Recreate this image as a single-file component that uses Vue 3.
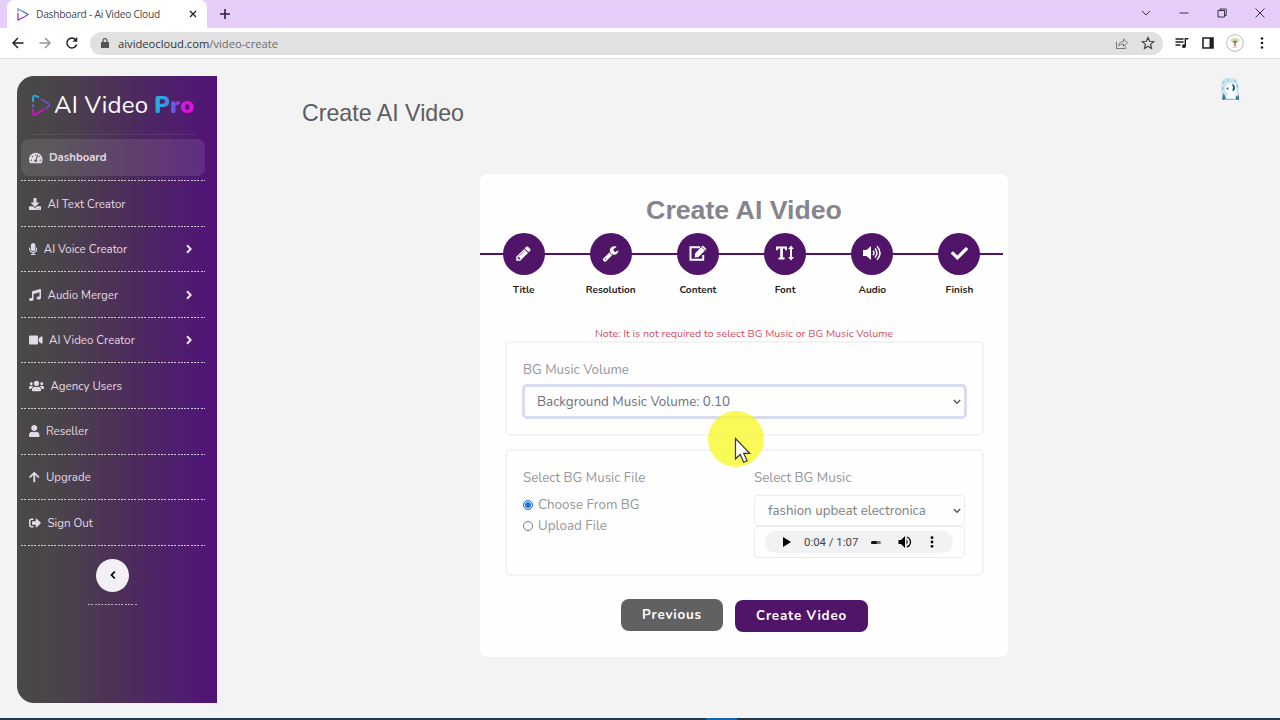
<script setup>
import {ref} from 'vue'

const menuItems = [
  {label: 'Dashboard', icon: 'gauge', active: true},
  {label: 'AI Text Creator', icon: 'download'},
  {label: 'AI Voice Creator', icon: 'microphone', sub: true},
  {label: 'Audio Merger', icon: 'music', sub: true},
  {label: 'AI Video Creator', icon: 'video', sub: true},
  {label: 'Agency Users', icon: 'users'},
  {label: 'Reseller', icon: 'user'},
  {label: 'Upgrade', icon: 'arrowUp'},
  {label: 'Sign Out', icon: 'signOut'},
]

const icons = {
  gauge: {w: 576, d: 'M288 32C128.94 32 0 160.94 0 320c0 52.8 14.25 102.26 39.06 144.8 5.61 9.62 16.3 15.2 27.44 15.2h443c11.14 0 21.83-5.58 27.44-15.2C561.75 422.26 576 372.8 576 320c0-159.06-128.94-288-288-288zm0 64c14.71 0 26.58 10.13 30.32 23.65-1.11 2.26-2.64 4.23-3.45 6.67l-9.22 27.67c-5.13 3.49-10.97 6.01-17.64 6.01-17.67 0-32-14.33-32-32S270.33 96 288 96zM96 384c-17.67 0-32-14.33-32-32s14.33-32 32-32 32 14.33 32 32-14.33 32-32 32zm48-160c-17.67 0-32-14.33-32-32s14.33-32 32-32 32 14.33 32 32-14.33 32-32 32zm246.77-72.41l-61.33 184C343.13 347.33 352 364.54 352 384c0 11.72-3.38 22.55-8.88 32H232.88c-5.5-9.45-8.88-20.28-8.88-32 0-33.94 26.5-61.43 59.9-63.59l61.34-184.01c4.17-12.56 17.73-19.45 30.36-15.17 12.57 4.19 19.35 17.79 15.17 30.36zm14.66 57.2l15.52-46.55c3.47-1.29 7.13-2.23 11.05-2.23 17.67 0 32 14.33 32 32s-14.33 32-32 32c-11.38-.01-20.89-6.28-26.57-15.22zM480 384c-17.67 0-32-14.33-32-32s14.33-32 32-32 32 14.33 32 32-14.33 32-32 32z'},
  download: {w: 512, d: 'M216 0h80c13.3 0 24 10.7 24 24v168h87.7c17.8 0 26.7 21.5 14.1 34.1L269.7 378.3c-7.5 7.5-19.8 7.5-27.3 0L90.1 226.1c-12.6-12.6-3.7-34.1 14.1-34.1H192V24c0-13.3 10.7-24 24-24zm296 376v112c0 13.3-10.7 24-24 24H24c-13.3 0-24-10.7-24-24V376c0-13.3 10.7-24 24-24h146.7l49 49c20.1 20.1 52.5 20.1 72.6 0l49-49H488c13.3 0 24 10.7 24 24zm-124 88c0-11-9-20-20-20s-20 9-20 20 9 20 20 20 20-9 20-20zm64 0c0-11-9-20-20-20s-20 9-20 20 9 20 20 20 20-9 20-20z'},
  microphone: {w: 352, d: 'M176 352c53.02 0 96-42.98 96-96V96c0-53.02-42.98-96-96-96S80 42.98 80 96v160c0 53.02 42.98 96 96 96zm160-160h-16c-8.84 0-16 7.16-16 16v48c0 74.8-64.49 134.82-140.79 127.38C96.71 376.89 48 317.11 48 250.3V208c0-8.84-7.16-16-16-16H16c-8.84 0-16 7.16-16 16v40.16c0 89.64 63.97 169.55 152 181.69V464H96c-8.84 0-16 7.16-16 16v16c0 8.84 7.16 16 16 16h160c8.84 0 16-7.16 16-16v-16c0-8.84-7.16-16-16-16h-56v-33.77C285.71 418.47 352 344.9 352 256v-48c0-8.84-7.16-16-16-16z'},
  music: {w: 512, d: 'M511.99 32.01c0-21.71-21.1-37.01-41.6-30.51L150.4 96c-13.3 4.2-22.4 16.5-22.4 30.5v261.42c-10.05-2.38-20.72-3.92-32-3.92-53.02 0-96 28.65-96 64s42.98 64 96 64 96-28.65 96-64V214.31l256-75.02v184.63c-10.05-2.38-20.72-3.92-32-3.92-53.02 0-96 28.65-96 64s42.98 64 96 64 96-28.65 96-64l-.01-351.99z'},
  video: {w: 576, d: 'M336.2 64H47.8C21.4 64 0 85.4 0 111.8v288.4C0 426.6 21.4 448 47.8 448h288.4c26.4 0 47.8-21.4 47.8-47.8V111.8c0-26.4-21.4-47.8-47.8-47.8zm189.4 37.7L416 177.3v157.4l109.6 75.5c21.2 14.6 50.4-.3 50.4-25.8V127.5c0-25.4-29.1-40.4-50.4-25.8z'},
  users: {w: 640, d: 'M96 224c35.3 0 64-28.7 64-64s-28.7-64-64-64-64 28.7-64 64 28.7 64 64 64zm448 0c35.3 0 64-28.7 64-64s-28.7-64-64-64-64 28.7-64 64 28.7 64 64 64zm32 32h-64c-17.6 0-33.5 7.1-45.1 18.6 40.3 22.1 68.9 62 75.1 109.4h66c17.7 0 32-14.3 32-32v-32c0-35.3-28.7-64-64-64zm-256 0c61.9 0 112-50.1 112-112S381.9 32 320 32 208 82.1 208 144s50.1 112 112 112zm76.8 32h-8.3c-20.8 10-43.9 16-68.5 16s-47.6-6-68.5-16h-8.3C179.6 288 128 339.6 128 403.2V432c0 26.5 21.5 48 48 48h288c26.5 0 48-21.5 48-48v-28.8c0-63.6-51.6-115.2-115.2-115.2zm-223.7-13.4C161.5 263.1 145.6 256 128 256H64c-35.3 0-64 28.7-64 64v32c0 17.7 14.3 32 32 32h65.9c6.3-47.4 34.9-87.3 75.2-109.4z'},
  user: {w: 448, d: 'M224 256c70.7 0 128-57.3 128-128S294.7 0 224 0 96 57.3 96 128s57.3 128 128 128zm89.6 32h-16.7c-22.2 10.2-46.9 16-72.9 16s-50.6-5.8-72.9-16h-16.7C60.2 288 0 348.2 0 422.4V464c0 26.5 21.5 48 48 48h352c26.5 0 48-21.5 48-48v-41.6c0-74.2-60.2-134.4-134.4-134.4z'},
  arrowUp: {w: 448, d: 'M34.9 289.5l-22.2-22.2c-9.4-9.4-9.4-24.6 0-33.9L207 39c9.4-9.4 24.6-9.4 33.9 0l194.3 194.3c9.4 9.4 9.4 24.6 0 33.9L413 289.4c-9.5 9.5-25 9.3-34.3-.4L264 168.6V456c0 13.3-10.7 24-24 24h-32c-13.3 0-24-10.7-24-24V168.6L69.2 289.1c-9.3 9.8-24.8 10-34.3.4z'},
  signOut: {w: 512, d: 'M497 273L329 441c-15 15-41 4.5-41-17v-96H152c-13.3 0-24-10.7-24-24v-96c0-13.3 10.7-24 24-24h136V88c0-21.4 25.9-32 41-17l168 168c9.3 9.4 9.3 24.6 0 34zM192 436v-40c0-6.6-5.4-12-12-12H96c-17.7 0-32-14.3-32-32V160c0-17.7 14.3-32 32-32h84c6.6 0 12-5.4 12-12V76c0-6.6-5.4-12-12-12H96c-53 0-96 43-96 96v192c0 53 43 96 96 96h84c6.6 0 12-5.4 12-12z'},
}

const steps = ['Title', 'Resolution', 'Content', 'Font', 'Audio', 'Finish']

const volume = ref('0.10')
const source = ref('bg')
</script>

<template>
  <div class="browser">
    <div class="tabbar">
      <div class="tab">
        <svg class="favicon" viewBox="0 0 12 13">
          <path d="M1 4V1l4 2" stroke="#5aa6e6" />
          <path d="M5 3l6 3.500-3 2" stroke="#5560d8" />
          <path d="M8 8.500L1 12V5" stroke="#b32bc8" />
        </svg>
        <span class="tab-title">Dashboard - Ai Video Cloud</span>
        <svg class="tab-close" viewBox="0 0 8 8"><path d="M1 1l6 6M7 1l-6 6" /></svg>
      </div>
      <svg class="tab-new" viewBox="0 0 12 12"><path d="M6 1v10M1 6h10" /></svg>
      <div class="window-buttons">
        <svg viewBox="0 0 12 12"><path d="M2 4l4 4 4-4" /></svg>
        <svg viewBox="0 0 12 12"><path d="M1.500 6h9" /></svg>
        <svg viewBox="0 0 12 12"><path d="M2 3.500h6.500V10H2zM4 3.500V2h6.200v6.500H8.500" /></svg>
        <svg viewBox="0 0 12 12"><path d="M1.500 1.500l9 9M10.500 1.500l-9 9" /></svg>
      </div>
    </div>

    <div class="toolbar">
      <svg class="nav-icon" viewBox="0 0 14 14"><path d="M12.500 7H2M7 2L2 7l5 5" /></svg>
      <svg class="nav-icon faded" viewBox="0 0 14 14"><path d="M1.500 7H12M7 2l5 5-5 5" /></svg>
      <svg class="nav-icon" viewBox="0 0 14 14"><path d="M11.700 8.500A5 5 0 1 1 10.800 3.800" /><path d="M12.300 1v4.800H7.500z" class="solid" /></svg>
      <div class="address">
        <svg class="lock" viewBox="0 0 8 10"><path d="M0 4h8v6H0z" fill="#55565a" /><path d="M2 4.500V2.700a2 2 0 0 1 4 0v1.800" fill="none" stroke="#55565a" stroke-width="1.200" /></svg>
        <span class="url"><b>aivideocloud.com</b>/video-create</span>
        <svg class="share" viewBox="0 0 14 13"><path d="M1.500 4.500v7h9V9.500M3.500 9c.5-3 2.300-4.500 5-4.500V2l4 3.800-4 3.700V7c-2.200 0-3.800.5-5 2z" /></svg>
        <svg class="star" viewBox="0 0 14 14"><path d="M7 1.600l1.600 3.700 4 .4-3 2.700.9 4L7 10.300l-3.500 2.100.9-4-3-2.700 4-.4z" /></svg>
      </div>
      <svg class="media" viewBox="0 0 14 12"><path d="M.5 2h8M.5 5h8M.5 8h5" /><path d="M10.300 9V1.700h3" /><circle cx="8.900" cy="9.200" r="1.900" /></svg>
      <svg class="panel-icon" viewBox="0 0 12 12"><path d="M1 1h10v10H1z" fill="none" stroke="#202124" stroke-width="1.600" /><path d="M7.500 1H11v10H7.500z" fill="#202124" /></svg>
      <svg class="profile" viewBox="0 0 18 18">
        <circle cx="9" cy="9" r="8.400" fill="#fdfdfb" stroke="#b0aaa4" stroke-width=".8" />
        <path d="M4.500 7c-.5-4 9.500-4 9 0-.5 1.500-2.500.5-4.500.5S5 8.500 4.500 7z" fill="#c6e3ad" />
        <path d="M9 6.500v6M9 9l2-1.700M9 9L7 7.300" stroke="#a5604f" stroke-width="1.300" fill="none" />
        <path d="M6.500 13.500h5" stroke="#e5d6bd" />
      </svg>
      <svg class="dots" viewBox="0 0 4 14"><circle cx="2" cy="2.500" r="1.300" /><circle cx="2" cy="7" r="1.300" /><circle cx="2" cy="11.500" r="1.300" /></svg>
    </div>

    <div class="page">
      <aside class="sidebar">
        <div class="brand">
          <svg class="brand-mark" viewBox="0 0 20 23">
            <path d="M2 8V3.500Q2.200 1 5 2l3 1.700" stroke="#2ba0dc" />
            <path d="M10 5l7.500 4.700q1.500 1.300 0 2.800l-2.300 1.600" stroke="#6a50d8" />
            <path d="M13.500 15.200L4.500 20.600Q2 21.500 2 19v-4" stroke="#c414d2" />
            <path d="M2 10.300v3" stroke="#5f62d8" />
          </svg>
          <span class="brand-name">AI Video</span>
          <span class="brand-pro">Pro</span>
        </div>
        <div class="brand-line"></div>
        <nav class="menu">
          <div v-for="item in menuItems" :key="item.label" class="menu-row">
            <a class="menu-item" :class="{active: item.active}">
              <svg class="menu-icon" :viewBox="`0 0 ${icons[item.icon].w} 512`" :style="{width: icons[item.icon].w / 512 * 12 + 'px'}">
                <path :d="icons[item.icon].d" />
              </svg>
              <span>{{ item.label }}</span>
              <svg v-if="item.sub" class="chevron" viewBox="0 0 6 10"><path d="M1 1.300L4.700 5 1 8.700" /></svg>
            </a>
          </div>
        </nav>
        <div class="collapse">
          <svg viewBox="0 0 6 10"><path d="M4.800 1.500L1.500 5l3.300 3.500" /></svg>
        </div>
        <div class="collapse-line"></div>
      </aside>

      <main class="main">
        <header class="top">
          <h1>Create AI Video</h1>
          <svg class="avatar" viewBox="0 0 20 24">
            <path d="M4 2Q10-1 16 2q3 4 3 9v11H1V9q0-5 3-7z" fill="#cfe5ee" />
            <path d="M5 10Q7 6 11 6q5 0 5 5l1 11H7q-1-3 1-6-3 0-3-2z" fill="#f6fbfd" />
            <path d="M11.500 7q4 .5 3.500 5l-1.800 2.300-1-1 1-2.800q-.2-1.500-1.700-3.500z" fill="#1f5366" />
            <circle cx="7.500" cy="11.500" r=".9" fill="#1f5366" />
            <path d="M2 23l1.500-7L5 19l1 4zM15.500 23l.5-5 1.500 2 1.500-3v6z" fill="#3f7388" />
            <path d="M1 23q9-3 18 0z" fill="#8cbccc" />
            <path d="M2.500 6l2-2M7 2.500l2 1M14 3l2 1.500M3 10v3M17.500 8v3" stroke="#7bb5cb" />
          </svg>
        </header>

        <section class="card">
          <h2>Create AI Video</h2>
          <ol class="steps">
            <li v-for="step in steps" :key="step">
              <span class="circle">
                <svg v-if="step === 'Title'" viewBox="0 0 1792 1792"><path d="M491 1536l91-91-235-235-91 91v107h128v128h107zm523-928q0-22-22-22-10 0-17 7l-542 542q-7 7-7 17 0 22 22 22 10 0 17-7l542-542q7-7 7-17zm-54-192l416 416-832 832h-416v-416zm683 96q0 53-37 90l-166 166-416-416 166-165q36-38 90-38 53 0 91 38l235 234q37 39 37 91z" /></svg>
                <svg v-else-if="step === 'Resolution'" viewBox="0 0 1792 1792"><path d="M448 1472q0-26-19-45t-45-19-45 19-19 45 19 45 45 19 45-19 19-45zm644-420l-682 682q-37 37-90 37-52 0-91-37l-106-108q-38-36-38-90 0-53 38-91l681-681q39 98 114.500 173.500t173.500 114.500zm634-435q0 39-23 106-47 134-164.500 217.500t-258.500 83.500q-185 0-316.500-131.500t-131.500-316.500 131.500-316.500 316.500-131.500q58 0 121.500 16.500t107.500 46.500q16 11 16 28t-16 28l-293 169v224l193 107q5-3 79-48.500t135.500-81 70.500-35.500q15 0 23.500 10t8.500 25z" /></svg>
                <svg v-else-if="step === 'Content'" class="wide" viewBox="0 0 20 18"><path d="M12 3.200H2.500v12.600h12.700V11" fill="none" stroke="#fff" stroke-width="2" /><path d="M7 9.500l7.800-8 3.700 3.500-8 8-3.700.4z" /><path d="M13.500 2.800l3.700 3.600" stroke="#4f1264" stroke-width=".7" /></svg>
                <svg v-else-if="step === 'Font'" class="wide" viewBox="0 0 20 18"><path d="M1 2.500h11v3.800h-1.700L9.700 4.600H7.900v9h1.700v1.900H3.500v-1.900h1.700v-9H3.400l-.7 1.700H1zM16 1.500l2.900 3.600H17v7.800h1.900L16 16.500l-2.900-3.600H15V5.100h-1.900z" /></svg>
                <svg v-else-if="step === 'Audio'" class="wide" viewBox="0 0 20 18"><path d="M1 6h3.500L9 2v14l-4.500-4H1z" /><path d="M11 6.800q2 2.200 0 4.400M13 4.500q3.800 4.500 0 9M15 2.200q6 6.800 0 13.600" fill="none" stroke="#fff" stroke-width="1.500" /></svg>
                <svg v-else viewBox="0 0 512 512"><path d="M173.898 439.404l-166.400-166.400c-9.997-9.997-9.997-26.206 0-36.204l36.203-36.204c9.997-9.998 26.207-9.998 36.204 0L192 312.690 432.095 72.596c9.997-9.997 26.207-9.997 36.204 0l36.203 36.204c9.997 9.997 9.997 26.206 0 36.204l-294.400 294.401c-9.998 9.997-26.207 9.997-36.204-.001z" /></svg>
              </span>
              <strong>{{ step }}</strong>
            </li>
          </ol>

          <p class="note">Note: It is not required to select BG Music or BG Music Volume</p>

          <div class="box volume-box">
            <label class="field-label">BG Music Volume</label>
            <div class="select focused">
              <span>Background Music Volume: {{ volume }}</span>
              <svg class="caret" viewBox="0 0 8 6"><path d="M.8 1L4 4.300 7.200 1" /></svg>
            </div>
          </div>

          <div class="box music-box">
            <div class="file-col">
              <label class="field-label">Select BG Music File</label>
              <label class="radio"><i :class="{on: source === 'bg'}"></i><span>Choose From BG</span></label>
              <label class="radio"><i :class="{on: source === 'upload'}"></i><span>Upload File</span></label>
            </div>
            <div class="music-col">
              <label class="field-label">Select BG Music</label>
              <div class="select">
                <span>fashion upbeat electronica</span>
                <svg class="caret" viewBox="0 0 8 6"><path d="M.8 1L4 4.300 7.200 1" /></svg>
              </div>
              <div class="player-box">
                <div class="player">
                  <svg class="play" viewBox="0 0 8 10"><path d="M0 0l8 5-8 5z" /></svg>
                  <span class="time">0:04 / 1:07</span>
                  <span class="track"><i></i></span>
                  <svg class="speaker" viewBox="0 0 14 12"><path d="M.5 4H3l4-4v12L3 8H.5z" /><path d="M8.500 3.300q2.300 2.700 0 5.400z" /><path d="M8.800 1q3.700 1.500 3.700 5t-3.700 5" fill="none" stroke="#000" stroke-width="1.300" /></svg>
                  <svg class="more" viewBox="0 0 4 12"><circle cx="2" cy="1.700" r="1.400" /><circle cx="2" cy="6" r="1.400" /><circle cx="2" cy="10.300" r="1.400" /></svg>
                </div>
              </div>
            </div>
          </div>

          <div class="actions">
            <button class="previous">Previous</button>
            <button class="create">Create Video</button>
          </div>
        </section>
      </main>
    </div>

    <div class="taskbar"><span></span></div>

    <div class="pointer">
      <svg viewBox="0 0 18 27"><path d="M1.500 1.500v20.300l4.700-4.200 3.500 7.700 3.400-1.600-3.400-7.300h6z" /></svg>
    </div>
  </div>
</template>

<style>
body {
  background: #f3f3f3;
  overflow: hidden;
}
</style>

<style scoped>
.browser {
  position: relative;
  display: flex;
  flex-direction: column;
  width: 1280px;
  height: 720px;
  overflow: hidden;
  background: #f3f3f3;
  font-family: Nunito, Lato, "Liberation Sans", sans-serif;
}

svg {
  display: block;
  flex: none;
}

.tabbar {
  display: flex;
  align-items: center;
  height: 28px;
  background: #e5cffa;
}

.tab {
  display: flex;
  align-items: center;
  box-sizing: border-box;
  width: 200px;
  height: 28px;
  margin-left: 7px;
  padding-left: 10px;
  background: #fff;
  border-radius: 7px 7px 0 0;
}

.favicon {
  width: 12px;
  height: 13px;
  fill: none;
  stroke-width: 1.3;
}

.tab-title {
  width: 147px;
  margin-left: 7px;
  color: #45464a;
  font: 10.2px "Open Sans", sans-serif;
  letter-spacing: -0.22px;
  white-space: nowrap;
}

.tab-close {
  width: 8px;
  height: 8px;
  margin-left: 6px;
  stroke: #222;
  stroke-width: 1.3;
}

.tab-new {
  width: 12px;
  height: 12px;
  margin-left: 12px;
  stroke: #2e1d3d;
  stroke-width: 1.6;
}

.window-buttons {
  display: flex;
  gap: 26px;
  margin: -3px 14px 0 auto;
}

.window-buttons svg {
  width: 12px;
  height: 12px;
  fill: none;
  stroke: #3d3049;
  stroke-width: 1;
}

.toolbar {
  display: flex;
  align-items: center;
  box-sizing: border-box;
  height: 31px;
  padding: 0 16px 0 11px;
  background: #fff;
  border-bottom: 1px solid #dcdcdc;
}

.nav-icon {
  width: 14px;
  height: 14px;
  margin-right: 13px;
  fill: none;
  stroke: #222;
  stroke-width: 1.5;
}

.nav-icon.faded {
  stroke: #96979a;
}

.nav-icon .solid {
  fill: #222;
  stroke: none;
}

.address {
  display: flex;
  align-items: center;
  box-sizing: border-box;
  width: 1073px;
  height: 23px;
  margin-left: -2px;
  padding: 0 8px 0 11px;
  background: #e1e1e1;
  border-radius: 12px;
}

.lock {
  width: 8px;
  height: 10px;
}

.url {
  margin: 0 auto 0 9px;
  color: #696a6d;
  font: 11.2px "Open Sans", sans-serif;
}

.url b {
  color: #333437;
  font-weight: 400;
}

.share {
  width: 14px;
  height: 13px;
  fill: none;
  stroke: #77787b;
  stroke-width: 1;
}

.star {
  width: 14px;
  height: 14px;
  margin-left: 12px;
  fill: none;
  stroke: #444;
  stroke-width: 1.2;
}

.media {
  width: 14px;
  height: 12px;
  margin-left: 12px;
  fill: none;
  stroke: #202124;
  stroke-width: 1.4;
}

.media circle {
  fill: #202124;
  stroke: none;
}

.panel-icon {
  width: 12px;
  height: 12px;
  margin-left: 13px;
}

.profile {
  width: 18px;
  height: 18px;
  margin-left: 12px;
}

.dots {
  width: 4px;
  height: 14px;
  margin-left: auto;
  fill: #202124;
}

.page {
  display: flex;
  flex: 1;
  padding-left: 17px;
}

.sidebar {
  box-sizing: border-box;
  width: 200px;
  height: 627px;
  margin-top: 17px;
  background: linear-gradient(90deg, #494848 0%, #4a4549 18%, #4d3058 50%, #4f1b70 85%, #501278 100%);
  border-radius: 17px 0 0 17px;
}

.brand {
  display: flex;
  align-items: center;
  height: 58px;
  padding-left: 14px;
}

.brand-mark {
  width: 20px;
  height: 23px;
  fill: none;
  stroke-width: 2;
}

.brand-name {
  width: 96px;
  margin-left: 3px;
  color: #fff;
  font-size: 24px;
  font-weight: 400;
  letter-spacing: 0.2px;
  white-space: nowrap;
}

.brand-pro {
  margin-left: 4px;
  background: linear-gradient(90deg, #2aa9e2 20%, #6a55e0 50%, #e010dc 75%);
  background-clip: text;
  color: transparent;
  font-size: 23.5px;
  font-weight: 900;
  letter-spacing: 0.3px;
}

.brand-line {
  height: 1px;
  margin: 0 20px 0 14px;
  background: rgba(255, 255, 255, 0.08);
}

.menu {
  width: 184px;
  margin: 4px 0 0 4px;
}

.menu-row {
  box-sizing: border-box;
  height: 45.6px;
  padding-top: 4px;
  background: repeating-linear-gradient(90deg, rgba(255, 255, 255, 0.75) 0 2px, transparent 2px 3.33px) bottom / 100% 1px no-repeat;
}

.menu-row:first-child {
  height: 42px;
  padding-top: 0;
}

.menu-item {
  display: flex;
  align-items: center;
  box-sizing: border-box;
  height: 37px;
  padding: 0 13px 0 8px;
  border-radius: 8px;
  color: #e2dae6;
  font-size: 11.5px;
}

.menu-item.active {
  background: rgba(255, 255, 255, 0.1);
  font-size: 11.3px;
  font-weight: 700;
}

.menu-icon {
  height: 12px;
  margin-right: 6.5px;
  fill: currentColor;
}

.chevron {
  width: 6px;
  height: 10px;
  margin-left: auto;
  fill: none;
  stroke: #f0e4f8;
  stroke-width: 2;
}

.collapse {
  display: flex;
  align-items: center;
  justify-content: center;
  width: 33px;
  height: 33px;
  margin: 13px 0 0 79px;
  background: #f3f0f3;
  border-radius: 50%;
}

.collapse svg {
  width: 6px;
  height: 10px;
  fill: none;
  stroke: #000;
  stroke-width: 1.8;
}

.collapse-line {
  width: 50px;
  height: 1px;
  margin: 12px 0 0 71px;
  background: repeating-linear-gradient(90deg, rgba(255, 255, 255, 0.6) 0 2px, transparent 2px 3.33px);
}

.main {
  flex: 1;
}

.top {
  display: flex;
  justify-content: space-between;
  height: 115px;
  padding: 0 40px 0 85px;
}

h1 {
  margin: 41px 0 0;
  color: #5c5c62;
  font: 23.2px/27px "Liberation Sans", sans-serif;
}

.avatar {
  width: 20px;
  height: 24px;
  margin-top: 18px;
}

.card {
  box-sizing: border-box;
  width: 528px;
  height: 483px;
  margin-left: 263px;
  background: #fefefe;
  border-radius: 7px;
}

h2 {
  margin: 0;
  padding-top: 21px;
  color: #85858f;
  font: bold 26.7px/30px "Liberation Sans", sans-serif;
  text-align: center;
}

.steps {
  display: grid;
  grid-template-columns: repeat(6, 1fr);
  width: 523px;
  margin: 8px 0 0;
  padding: 0;
  background: linear-gradient(#501469, #501469) 0 20px / 100% 2px no-repeat;
  list-style: none;
}

.steps li {
  display: flex;
  flex-direction: column;
  align-items: center;
}

.circle {
  display: flex;
  align-items: center;
  justify-content: center;
  box-sizing: border-box;
  width: 42px;
  height: 42px;
  padding-bottom: 2px;
  background: #501469;
  border-radius: 50%;
}

.circle svg {
  width: 17px;
  height: 17px;
  fill: #fff;
}

.circle svg.wide {
  width: 20px;
  height: 18px;
}

.steps strong {
  margin-top: 8px;
  color: #222;
  font-size: 10px;
  line-height: 14px;
}

.note {
  margin: 30px 0 0;
  color: #d0505f;
  font-size: 10.7px;
  line-height: 14px;
  text-align: center;
}

.box {
  box-sizing: border-box;
  width: 479px;
  margin-left: 25px;
  border: 2px solid #f3f3f5;
  border-radius: 5px;
}

.volume-box {
  height: 95px;
  padding: 18px 15px 0;
}

.field-label {
  display: block;
  padding-left: 1px;
  color: #96969b;
  font-size: 13.35px;
  line-height: 18px;
}

.select {
  display: flex;
  align-items: center;
  justify-content: space-between;
  box-sizing: border-box;
  height: 31px;
  padding: 0 3px 0 13px;
  border: 1px solid #ececef;
  border-radius: 4px;
  color: #7d7e86;
  font-size: 13.4px;
}

.select.focused {
  height: 35px;
  margin-top: 5px;
  padding: 0 3px 0 12px;
  border: 3px solid #d9dbf0;
  border-radius: 5px;
  color: #6e707e;
}

.caret {
  width: 8px;
  height: 6px;
  fill: none;
  stroke: #555;
  stroke-width: 1.3;
}

.music-box {
  display: flex;
  height: 127px;
  margin-top: 13px;
  padding: 18px 16px 0 15px;
}

.file-col {
  width: 232px;
}

.music-col {
  width: 211px;
}

.music-col .field-label {
  padding-left: 0;
}

.music-col .select {
  margin-top: 8px;
}

.radio {
  display: flex;
  align-items: center;
  height: 21px;
  padding-left: 1px;
  color: #96969b;
  font-size: 13.4px;
}

.field-label + .radio {
  margin-top: 7px;
}

.radio i {
  box-sizing: border-box;
  width: 10px;
  height: 10px;
  margin-right: 5px;
  border: 1px solid #777;
  border-radius: 50%;
}

.radio i.on {
  border-color: #1a73d6;
  background: #1a73d6;
  box-shadow: inset 0 0 0 1px #fff;
}

.player-box {
  box-sizing: border-box;
  height: 32px;
  padding: 4px 11px 0 10px;
  border: 1px solid #ececef;
  border-radius: 4px;
}

.player {
  display: flex;
  align-items: center;
  height: 22px;
  padding: 0 19px 0 18px;
  background: #f1f2f4;
  border-radius: 11px;
}

.play {
  width: 8px;
  height: 10px;
}

.time {
  margin-left: 13px;
  color: #444;
  font: 11.4px Roboto, sans-serif;
}

.track {
  width: 10px;
  height: 3px;
  margin-left: auto;
  background: #777;
  border-radius: 2px;
}

.track i {
  display: block;
  width: 6px;
  height: 3px;
  background: #111;
  border-radius: 2px;
}

.speaker {
  width: 14px;
  height: 12px;
  margin-left: 17px;
}

.more {
  width: 4px;
  height: 12px;
  margin-left: 18px;
}

.actions {
  display: flex;
  gap: 12px;
  margin: 23px 0 0 141px;
}

.actions button {
  width: 102px;
  height: 32px;
  padding: 0 0 1px;
  border: 0;
  border-radius: 8px;
  background: #616161;
  color: #fff;
  font: bold 13.4px Nunito, Lato, sans-serif;
  letter-spacing: 0.8px;
}

.actions .create {
  width: 133px;
  margin-top: 1px;
  background: #501469;
}

.taskbar {
  height: 2px;
  background: #1f3a4d;
}

.taskbar span {
  display: block;
  width: 31px;
  height: 2px;
  margin-left: 706px;
  background: #1464b4;
}

.pointer {
  position: absolute;
  left: 708px;
  top: 411px;
  width: 56px;
  height: 56px;
  background: rgba(247, 248, 40, 0.78);
  border-radius: 50%;
}

.pointer svg {
  position: absolute;
  left: 26px;
  top: 26px;
  width: 18px;
  height: 27px;
  fill: #fff;
  stroke: #333;
  stroke-width: 1.2;
}
</style>
